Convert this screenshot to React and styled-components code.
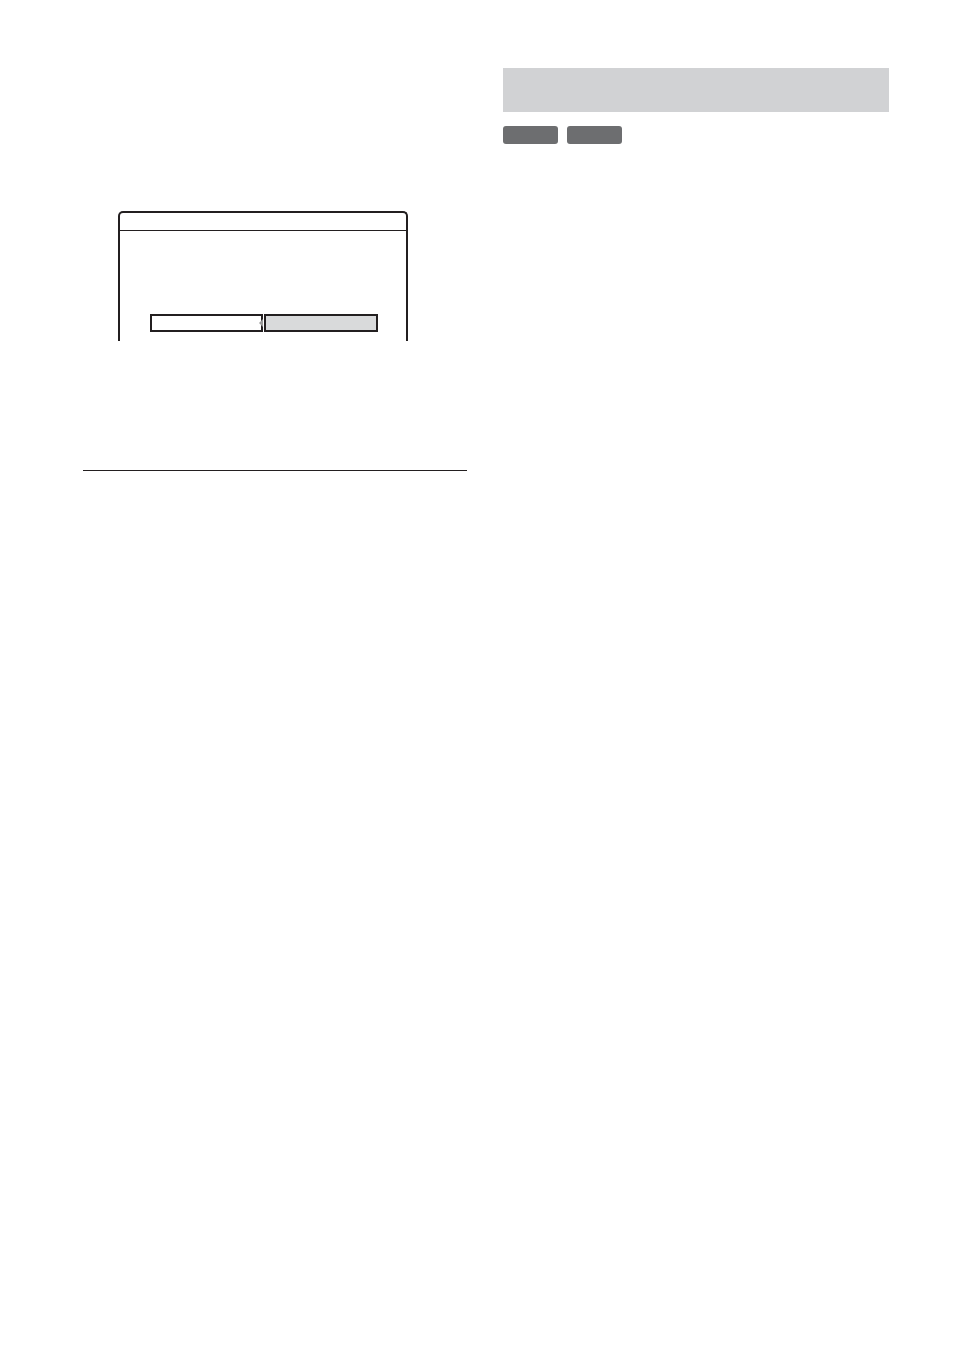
import React from 'react'
import styled, { createGlobalStyle } from 'styled-components'

const GlobalStyle = createGlobalStyle`
  html, body {
    margin: 0;
    padding: 0;
    background: #ffffff;
    font-family: "Liberation Sans", Arial, sans-serif;
  }
`

const Page = styled.div`
  width: 954px;
  height: 1351px;
  box-sizing: border-box;
  padding-left: 83px;
  display: grid;
  grid-template-columns: 384px 386px;
  column-gap: 36px;
  align-items: start;
`

const LeftColumn = styled.div`
  display: flex;
  flex-direction: column;
  padding-top: 211px;
`

const Screen = styled.div`
  margin-left: 35px;
  width: 290px;
  height: 130px;
  box-sizing: border-box;
  border: 2px solid #231f20;
  border-bottom: none;
  border-radius: 5px 5px 0 0;
  display: flex;
  flex-direction: column;
`

const ScreenHeader = styled.div`
  height: 17px;
  border-bottom: 1px solid #231f20;
`

const ScreenBody = styled.div`
  flex: 1;
  padding: 83px 0 0 30px;
`

const ChoiceRow = styled.div`
  position: relative;
  display: flex;
  gap: 1px;
`

const Choice = styled.div`
  width: ${p => p.$width}px;
  height: 18px;
  box-sizing: border-box;
  border: 2px solid #231f20;
  background: ${p => (p.$selected ? '#d9dadb' : '#ffffff')};
`

const Pointer = styled.span`
  position: absolute;
  left: 109px;
  top: 5px;
  width: 0;
  height: 0;
  border-top: 4px solid transparent;
  border-bottom: 4px solid transparent;
  border-right: 4px solid #9a9a9a;
`

const Rule = styled.hr`
  margin: 129px 0 0;
  width: 384px;
  border: none;
  border-top: 1.3px solid #231f20;
`

const RightColumn = styled.div`
  display: flex;
  flex-direction: column;
  padding-top: 68px;
`

const HeadingBar = styled.div`
  height: 44px;
  background: #d1d2d4;
`

const BadgeRow = styled.div`
  display: flex;
  gap: 9px;
  margin-top: 14px;
`

const Badge = styled.span`
  width: 55px;
  height: 18px;
  border-radius: 3px;
  background: #6d6e70;
`

export default function App() {
  return (
    <>
      <GlobalStyle />
      <Page>
        <LeftColumn>
          <Screen>
            <ScreenHeader />
            <ScreenBody>
              <ChoiceRow>
                <Choice $width={113} />
                <Choice $width={114} $selected />
                <Pointer />
              </ChoiceRow>
            </ScreenBody>
          </Screen>
          <Rule />
        </LeftColumn>
        <RightColumn>
          <HeadingBar />
          <BadgeRow>
            <Badge />
            <Badge />
          </BadgeRow>
        </RightColumn>
      </Page>
    </>
  )
}
